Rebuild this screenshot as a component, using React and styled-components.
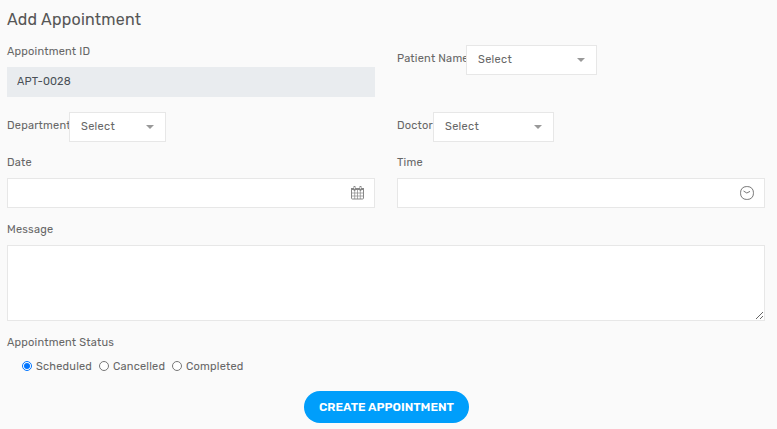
import React from 'react';
import styled, { createGlobalStyle } from 'styled-components';

const GlobalStyle = createGlobalStyle`
  * { box-sizing: border-box; }
  body {
    margin: 0;
    background: #fafafa;
    color: #666;
    font-family: Rubik, Roboto, "Liberation Sans", sans-serif;
    font-size: 11px;
    overflow: hidden;
  }
`;

const Page = styled.main`
  width: 777px;
  height: 429px;
  padding: 9px 12px 0 7px;
  background: #fafafa;
`;

const Title = styled.h4`
  margin: 0 0 15px;
  height: 21px;
  line-height: 21px;
  font-size: 16px;
  font-weight: 400;
  letter-spacing: 0.22px;
  color: #565656;
`;

const Row = styled.div`
  display: grid;
  grid-template-columns: repeat(2, 368px);
  column-gap: 22px;
  margin-bottom: ${(p) => p.$gap ?? 15}px;
`;

const Field = styled.div`
  display: flex;
  flex-direction: column;
`;

const InlineField = styled.div`
  display: flex;
  align-items: flex-start;
`;

const Label = styled.label`
  display: block;
  height: 14px;
  line-height: 14px;
  margin-bottom: 8px;
  white-space: nowrap;
  letter-spacing: ${(p) => p.$track ?? 0.2}px;
`;

const InlineLabel = styled(Label)`
  width: ${(p) => p.$width}px;
  margin: 7px 0 0;
`;

const Control = styled.div`
  display: flex;
  align-items: center;
  height: 30px;
  border: 1px solid #e7e7e7;
  background: #fff;
`;

const Input = styled.input`
  flex: 1;
  min-width: 0;
  height: 100%;
  padding: 0 9px;
  border: 0;
  outline: 0;
  background: transparent;
  font: inherit;
`;

const DisabledInput = styled.input`
  width: 100%;
  height: 30px;
  padding: 0 10px 1px;
  border: 0;
  border-radius: 0;
  outline: 0;
  background: #e9ecef;
  color: #495057;
  font: inherit;
  letter-spacing: 0.12px;
`;

const SelectBox = styled.div`
  display: flex;
  align-items: center;
  justify-content: space-between;
  width: ${(p) => p.$width}px;
  height: 30px;
  padding: 0 11px;
  border: 1px solid #e7e7e7;
  background: #fff;
  line-height: 28px;
  letter-spacing: 0.3px;
`;

const Caret = styled.span`
  border: 4px solid transparent;
  border-top-color: #999;
  border-bottom: 0;
`;

const Icon = styled.svg`
  flex: none;
  margin-right: 10px;
`;

const Message = styled.textarea`
  display: block;
  width: 758px;
  height: 76px;
  padding: 6px 10px;
  border: 1px solid #e7e7e7;
  border-radius: 0;
  outline: 0;
  background: #fff;
  font: inherit;
  resize: vertical;
`;

const Block = styled.div`
  margin-bottom: ${(p) => p.$gap}px;
`;

const RadioGroup = styled.div`
  display: flex;
  padding-left: 15px;
`;

const RadioLabel = styled.label`
  display: flex;
  align-items: center;
  height: 16px;
  width: ${(p) => p.$width}px;
  white-space: nowrap;
  letter-spacing: ${(p) => p.$track}px;
`;

const Radio = styled.input`
  width: 10px;
  height: 10px;
  margin: 0 4px 0 0;
  flex: none;
`;

const Actions = styled.div`
  display: flex;
  justify-content: center;
  width: 759px;
`;

const SubmitButton = styled.button`
  width: 165px;
  height: 32px;
  padding: 0;
  border: 0;
  border-radius: 16px;
  background: #009efb;
  color: #fff;
  font: inherit;
  font-size: 12px;
  font-weight: 600;
  white-space: nowrap;
`;

function Select({ width }) {
  return (
    <SelectBox $width={width}>
      Select
      <Caret />
    </SelectBox>
  );
}

function CalendarIcon() {
  return (
    <Icon width="13" height="14" viewBox="0 0 13 14" fill="none" stroke="#888">
      <path d="M.5 3.5v8.6q0 .9.9.9h10.2q.9 0 .9-.9V3.5" />
      <path d="M0 3h13" strokeWidth="2" />
      <path d="M3.5 4V.8M9.5 4V.8" strokeWidth="2" strokeLinecap="round" />
      <path d="M3.5 1v2M9.5 1v2" stroke="#ddd" />
      <path d="M1 7h11M1 10h11M3.7 4v9M6.5 4v9M9.3 4v9" strokeWidth=".7" />
    </Icon>
  );
}

function ClockIcon() {
  return (
    <Icon width="14" height="14" viewBox="0 0 14 14" fill="none" stroke="#777">
      <rect x=".6" y=".6" width="12.8" height="12.8" rx="5.6" />
      <path d="M3.5 5l3.3 2L10 5.4" />
    </Icon>
  );
}

export default function App() {
  return (
    <>
      <GlobalStyle />
      <Page>
        <Title>Add Appointment</Title>
        <Row>
          <Field>
            <Label>Appointment ID</Label>
            <DisabledInput defaultValue="APT-0028" readOnly />
          </Field>
          <InlineField>
            <InlineLabel $width={69}>Patient Name</InlineLabel>
            <Select width={131} />
          </InlineField>
        </Row>
        <Row $gap={14}>
          <InlineField>
            <InlineLabel $width={62}>Department</InlineLabel>
            <Select width={97} />
          </InlineField>
          <InlineField>
            <InlineLabel $width={36}>Doctor</InlineLabel>
            <Select width={121} />
          </InlineField>
        </Row>
        <Row>
          <Field>
            <Label>Date</Label>
            <Control>
              <Input aria-label="Date" />
              <CalendarIcon />
            </Control>
          </Field>
          <Field>
            <Label>Time</Label>
            <Control>
              <Input aria-label="Time" />
              <ClockIcon />
            </Control>
          </Field>
        </Row>
        <Block $gap={15}>
          <Label>Message</Label>
          <Message />
        </Block>
        <Block $gap={17}>
          <Label>Appointment Status</Label>
          <RadioGroup>
            <RadioLabel $width={77} $track={0.2}>
              <Radio type="radio" name="status" defaultChecked />
              Scheduled
            </RadioLabel>
            <RadioLabel $width={73} $track={0.2}>
              <Radio type="radio" name="status" />
              Cancelled
            </RadioLabel>
            <RadioLabel $width={80} $track={0.2}>
              <Radio type="radio" name="status" />
              Completed
            </RadioLabel>
          </RadioGroup>
        </Block>
        <Actions>
          <SubmitButton type="button">CREATE APPOINTMENT</SubmitButton>
        </Actions>
      </Page>
    </>
  );
}
